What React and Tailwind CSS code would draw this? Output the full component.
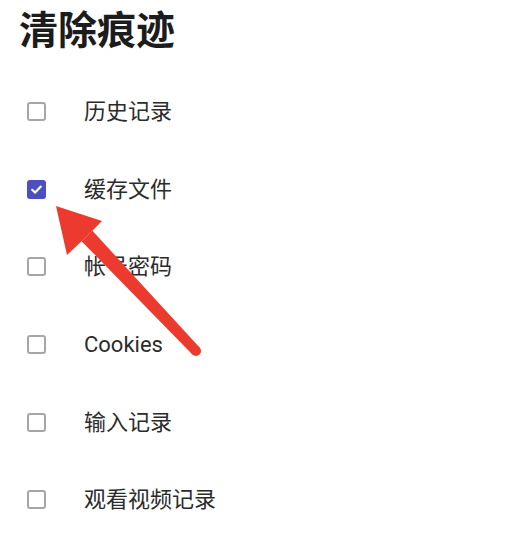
import React from "react";

const items = [
  { label: "历史记录", checked: false },
  { label: "缓存文件", checked: true },
  { label: "帐号密码", checked: false },
  { label: "Cookies", checked: false },
  { label: "输入记录", checked: false },
  { label: "观看视频记录", checked: false },
];

function Box({ checked }) {
  if (checked) {
    return (
      <div className="w-[19px] h-[19px] rounded-[3px] bg-[#4b4fc0] flex items-center justify-center shrink-0">
        <svg width="13" height="13" viewBox="0 0 13 13">
          <path d="M2.2 6.8 L5.2 9.6 L10.8 3.6" stroke="#fff" strokeWidth="2.2" fill="none" strokeLinecap="round" strokeLinejoin="round" />
        </svg>
      </div>
    );
  }
  return <div className="w-[19px] h-[19px] rounded-[3px] border-[2.5px] border-[#a6a6a6] shrink-0" />;
}

export default function App() {
  return (
    <div
      className="relative w-[506px] h-[557px] bg-white overflow-hidden"
      style={{ fontFamily: 'Roboto, "Noto Sans CJK SC", sans-serif' }}
    >
      <div className="pt-[4px] pl-[19px]">
        <h1 className="text-[39px] leading-[46px] font-bold text-[#1c1c1c]" style={{ fontFamily: '"Noto Sans CJK SC", sans-serif' }}>
          清除痕迹
        </h1>
      </div>
      <div className="mt-[23px] flex flex-col">
        {items.map((it) => (
          <div key={it.label} className="h-[77.6px] flex items-center pl-[27px] gap-[38px]">
            <Box checked={it.checked} />
            <span className="text-[22px] text-[#2b2b2b]">{it.label}</span>
          </div>
        ))}
      </div>
      <svg className="absolute left-0 top-0 pointer-events-none" width="506" height="557" viewBox="0 0 506 557">
        <polygon points="81.6,241.2 92.4,230.8 199.6,347.5 192.4,354.5" fill="#ec3a2f" />
        <circle cx="196" cy="351" r="5" fill="#ec3a2f" />
        <polygon points="56,206 102,221 92.4,230.8 81.6,241.2 67,255" fill="#ec3a2f" />
      </svg>
    </div>
  );
}
